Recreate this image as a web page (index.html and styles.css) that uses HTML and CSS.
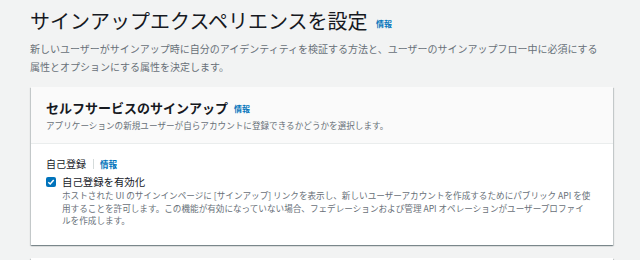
FILE: index.html
```html
<!DOCTYPE html>
<html>
<head>
  <meta charset="utf-8">
  <title>サインアップエクスペリエンスを設定</title>
  <link rel="stylesheet" href="styles.css">
</head>
<body>
  <div class="page">
    <div class="page-header">
      <h1>サインアップエクスペリエンスを設定 <a class="info" href="#">情報</a></h1>
      <p class="page-desc">新しいユーザーがサインアップ時に自分のアイデンティティを検証する方法と、ユーザーのサインアップフロー中に必須にする属性とオプションにする属性を決定します。</p>
    </div>

    <div class="card">
      <div class="card-header">
        <h2>セルフサービスのサインアップ <a class="info" href="#">情報</a></h2>
        <p>アプリケーションの新規ユーザーが自らアカウントに登録できるかどうかを選択します。</p>
      </div>
      <div class="card-body">
        <div class="field-label">
          <span>自己登録</span>
          <span class="divider"></span>
          <a class="info" href="#">情報</a>
        </div>
        <label class="checkbox-row">
          <span class="checkbox">
            <svg width="8" height="8" viewBox="0 0 8 8"><path d="M1.3 4.2 L3.2 6 L6.7 1.9" fill="none" stroke="#fff" stroke-width="1.5"/></svg>
          </span>
          <span class="checkbox-text">
            <span class="checkbox-title">自己登録を有効化</span>
            <span class="checkbox-desc">ホストされた UI のサインインページに [サインアップ] リンクを表示し、新しいユーザーアカウントを作成するためにパブリック API を使用することを許可します。この機能が有効になっていない場合、フェデレーションおよび管理 API オペレーションがユーザープロファイ<br>ルを作成します。</span>
          </span>
        </label>
      </div>
    </div>

    <div class="card card-next"></div>
  </div>
</body>
</html>
```

FILE: styles.css
```css
body {
  margin: 0;
  background-color: #f2f3f3;
  font-family: "Noto Sans CJK JP", "Noto Sans", sans-serif;
  color: #16191f;
}
.page {
  padding: 7px 27px 0 30px;
}
h1 {
  font-size: 20px;
  font-weight: 400;
  line-height: 28px;
  margin: 0;
}
.info {
  color: #0073bb;
  font-size: 8px;
  font-weight: bold;
  text-decoration: none;
  vertical-align: middle;
}
h1 .info {
  margin-left: 4px;
}
.page-desc {
  margin: 2px 0 0;
  width: 572px;
  font-size: 10px;
  line-height: 18px;
  color: #687078;
}
.card {
  margin: 11px 0 0 1px;
  background-color: #fff;
  box-shadow: 0 1px 1px 0 rgba(0,28,36,0.3), 1px 1px 1px 0 rgba(0,28,36,0.15), -1px 1px 1px 0 rgba(0,28,36,0.15);
}
.card-header {
  background-color: #fafafa;
  border-bottom: 1px solid #eaeded;
  padding: 12px 15px 11px;
}
.card-header h2 {
  margin: 0;
  font-size: 13px;
  font-weight: bold;
  line-height: 18px;
}
.card-header h2 .info {
  margin-left: 3px;
}
.card-header p {
  margin: 0;
  font-size: 8.6px;
  line-height: 14px;
  color: #687078;
}
.card-body {
  padding: 12px 15px 18px;
}
.field-label {
  display: flex;
  align-items: center;
  font-size: 10px;
  line-height: 16px;
  color: #16191f;
}
.divider {
  width: 1px;
  height: 10px;
  background-color: #d5dbdb;
  margin: 0 6px 0 7px;
}
.field-label .info {
  font-size: 8.6px;
}
.checkbox-row {
  display: flex;
  align-items: flex-start;
  margin-top: 3px;
}
.checkbox {
  flex: none;
  width: 10px;
  height: 10px;
  border-radius: 2px;
  background-color: #0073bb;
  display: flex;
  align-items: center;
  justify-content: center;
  margin-top: 2px;
}
.checkbox-text {
  display: flex;
  flex-direction: column;
  margin-left: 6px;
}
.checkbox-title {
  font-size: 10.4px;
  line-height: 14px;
}
.checkbox-desc {
  width: 532px;
  font-size: 8.6px;
  line-height: 12.5px;
  color: #687078;
}
.card-next {
  margin-top: 13px;
  height: 40px;
}
```
